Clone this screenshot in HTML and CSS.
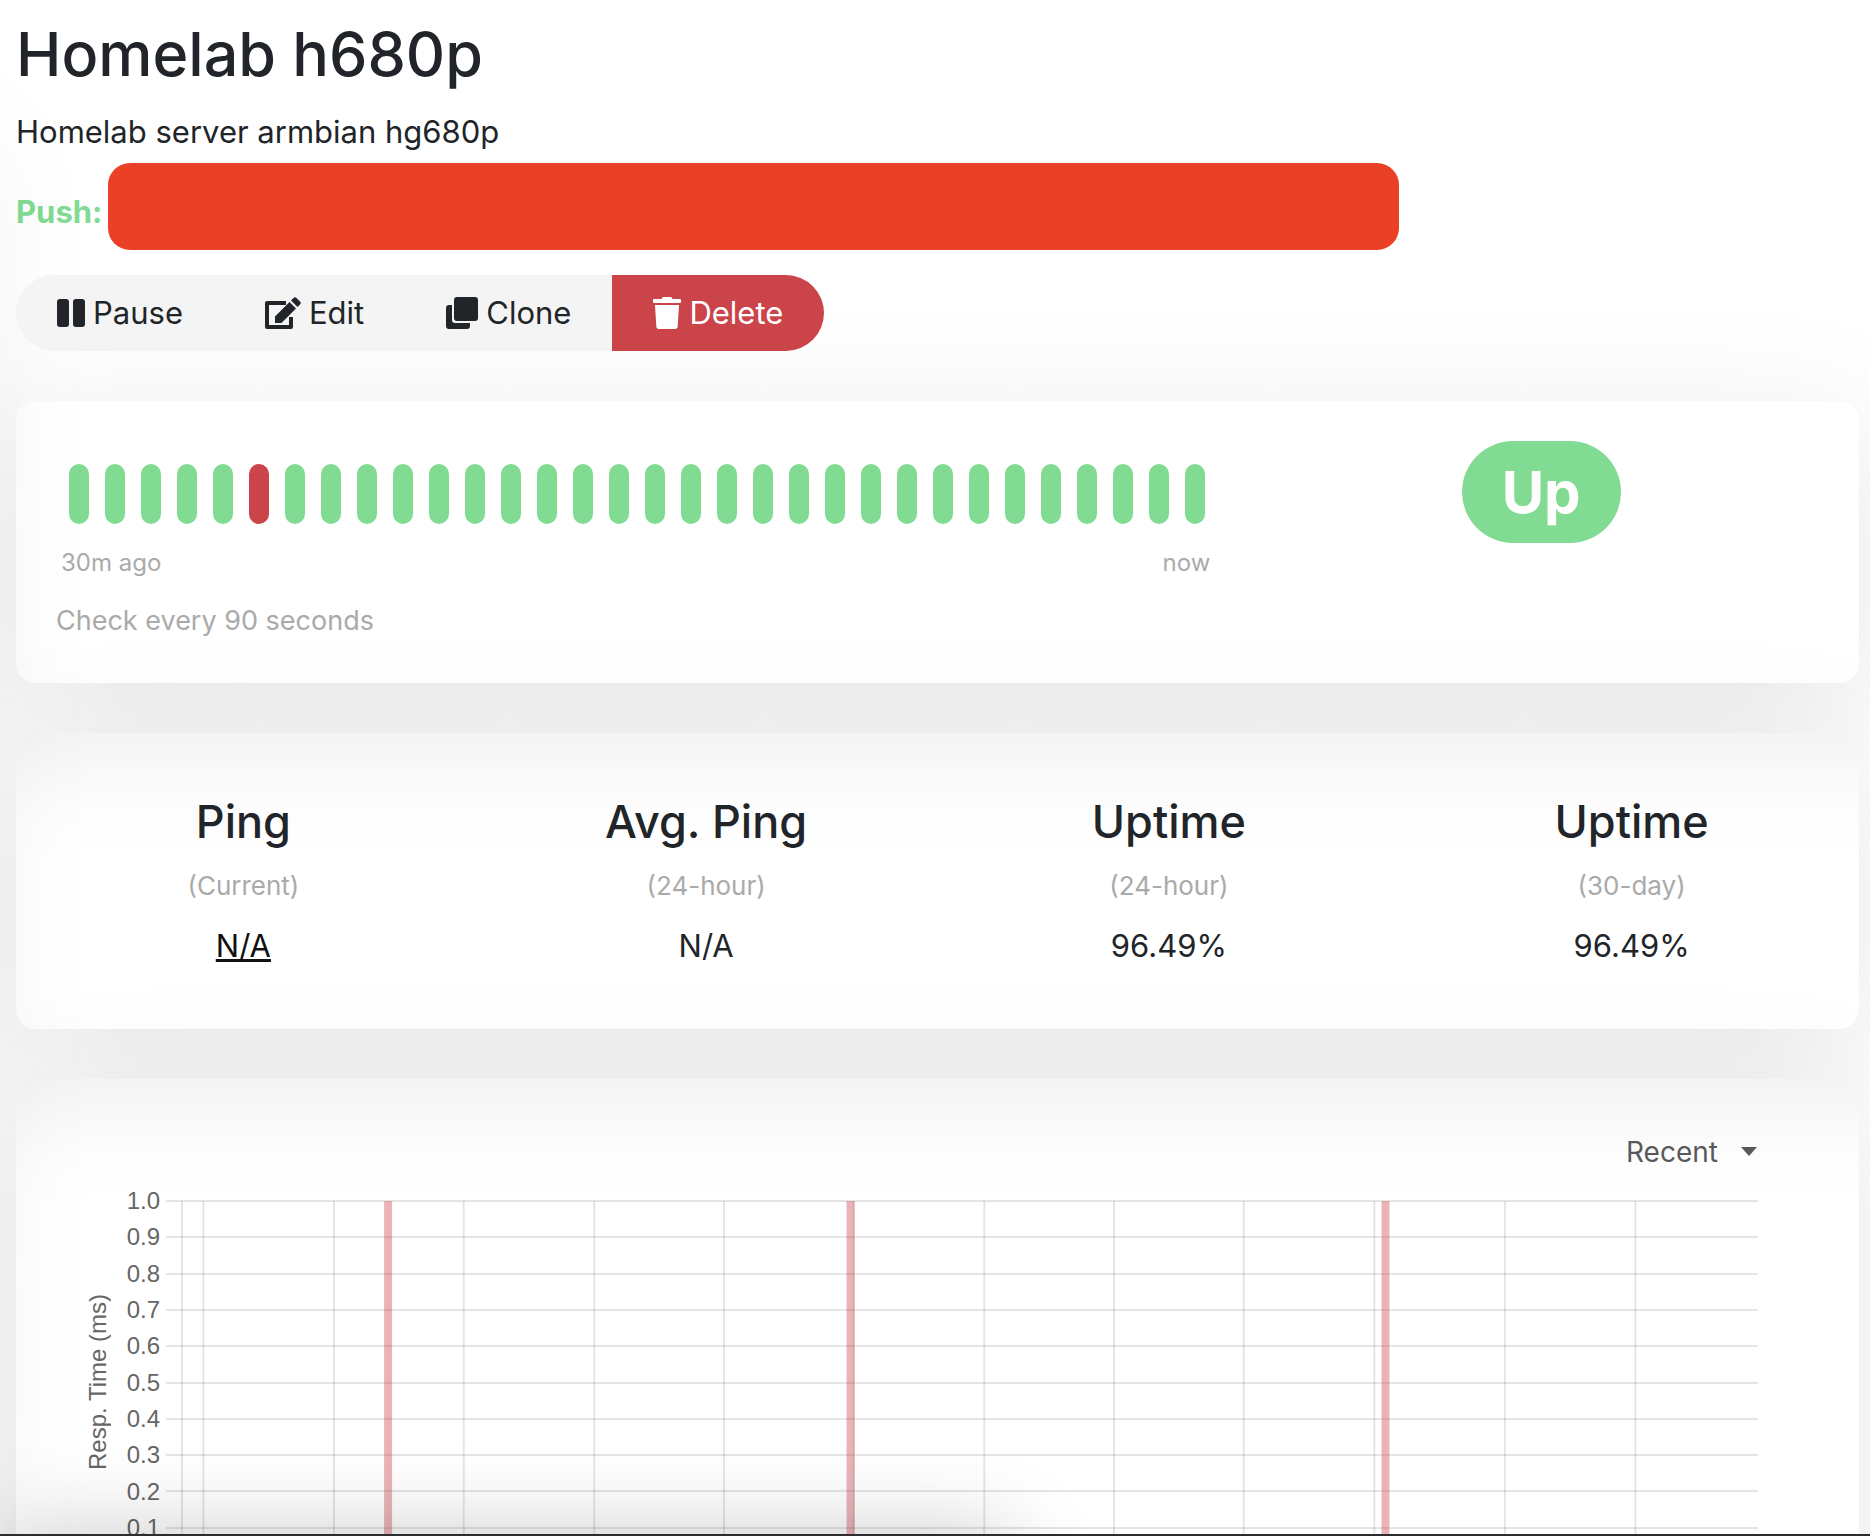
FILE: index.html
```html
<!DOCTYPE html>
<html lang="en">
<head>
    <meta charset="UTF-8">
    <meta name="viewport" content="width=device-width, initial-scale=1.0">
    <title>Homelab h680p</title>
    <link rel="stylesheet" href="styles.css">
</head>
<body>

<div class="list-edge"></div>

<main class="page">
    <h1>Homelab h680p</h1>
    <p class="description">Homelab server armbian hg680p</p>
    <div class="push">
        <span class="push-label">Push:</span>
        <span class="push-url"></span>
    </div>

    <div class="btn-group">
        <button type="button" class="btn">
            <svg class="icon icon-pause" viewBox="0 0 28 32"><rect x="0" y="2" width="12" height="28" rx="3"/><rect x="16" y="2" width="12" height="28" rx="3"/></svg>
            Pause
        </button>
        <button type="button" class="btn">
            <svg class="icon icon-edit" viewBox="0 0 36 32"><path d="M21 6H2V30H26V20" fill="none" stroke="currentColor" stroke-width="4" stroke-linejoin="round"/><path d="M10 26V19.500L24.500 5L31 11.500L16.500 26Z"/><path d="M26 3.500L28.500 1Q30 -.5 31.500 1L35 4.500Q36.500 6 35 7.500L32.500 10Z"/></svg>
            Edit
        </button>
        <button type="button" class="btn">
            <svg class="icon icon-clone" viewBox="0 0 32 32"><rect x="8" y="0" width="24" height="24" rx="3"/><path d="M6 8H3Q0 8 0 11V29Q0 32 3 32H21Q24 32 24 29V26H9Q6 26 6 23Z"/></svg>
            Clone
        </button>
        <button type="button" class="btn btn-danger">
            <svg class="icon icon-trash" viewBox="0 0 28 32"><path d="M10.500 0H17.500Q18.500 0 19 1L19.500 2H27Q28 2 28 3V5Q28 6 27 6H1Q0 6 0 5V3Q0 2 1 2H8.500L9 1Q9.500 0 10.500 0Z"/><path d="M2 8H26L24.700 29.200Q24.500 32 21.700 32H6.300Q3.500 32 3.300 29.200Z"/></svg>
            Delete
        </button>
    </div>

    <section class="card heartbeat">
        <div class="heartbeat-col">
            <div class="beats" id="beats"></div>
            <div class="beat-times"><span>30m ago</span><span>now</span></div>
            <p class="interval">Check every 90 seconds</p>
        </div>
        <div class="status-col"><span class="badge">Up</span></div>
    </section>

    <section class="card stats">
        <div class="stats-row">
            <div class="stat">
                <h4>Ping</h4>
                <p>(Current)</p>
                <a href="#chart">N/A</a>
            </div>
            <div class="stat">
                <h4>Avg. Ping</h4>
                <p>(24-hour)</p>
                <span>N/A</span>
            </div>
            <div class="stat">
                <h4>Uptime</h4>
                <p>(24-hour)</p>
                <span>96.49%</span>
            </div>
            <div class="stat">
                <h4>Uptime</h4>
                <p>(30-day)</p>
                <span>96.49%</span>
            </div>
        </div>
    </section>

    <section class="card chart-card" id="chart">
        <div class="period">
            <select aria-label="Chart period">
                <option>Recent</option>
            </select>
            <svg class="caret" viewBox="0 0 16 9"><path d="M0 0H16L8 9Z"/></svg>
        </div>
        <div class="chart">
            <div class="axis-title">Resp. Time (ms)</div>
            <div class="axis-labels" id="labels"></div>
            <svg class="plot" id="plot"></svg>
        </div>
    </section>
</main>

<div class="bottom-shade"></div>
<div class="bottom-bar"></div>

<script>
    // Heartbeats, oldest first
    const beats = document.getElementById('beats');
    for (let i = 0; i < 32; i++) {
        const beat = document.createElement('div');
        beat.className = i === 5 ? 'beat down' : 'beat';
        beats.appendChild(beat);
    }

    // Response time chart, x positions are a share of the plot width
    const ticks = [1, 2.35, 10.55, 18.7, 26.9, 35.05, 43.2, 51.4, 59.55, 67.7, 75.9, 84.1, 92.3];
    const downs = [13.95, 43, 76.6];
    const labels = document.getElementById('labels');
    let lines = '';

    for (let i = 0; i < 10; i++) {
        const y = Math.round(i * 36.3) + 1;
        lines += `<line class="grid" x1="0" x2="100%" y1="${y}" y2="${y}"/>`;
        labels.innerHTML += `<span>${((10 - i) / 10).toFixed(1)}</span>`;
    }
    ticks.forEach(x => {
        lines += `<line class="grid" x1="${x}%" x2="${x}%" y1="1" y2="100%"/>`;
    });
    downs.forEach(x => {
        lines += `<line class="down-bar" x1="${x}%" x2="${x}%" y1="1" y2="100%"/>`;
    });
    document.getElementById('plot').innerHTML = lines;
</script>

</body>
</html>
```
FILE: styles.css
```css
* {
    box-sizing: border-box;
}
body {
    margin: 0;
    height: 100vh;
    overflow: hidden;
    background-color: #fff;
    color: #212529;
    font-family: Inter, "Noto Sans", sans-serif;
    font-size: 31px;
    line-height: 48px;
}
h1, h4, p {
    margin: 0;
}
.page {
    padding: 16px 11px 0 16px;
}
h1 {
    font-size: 61px;
    font-weight: 500;
    line-height: 76px;
    margin-bottom: 16px;
}

/* Push address */
.push {
    display: flex;
    align-items: center;
    gap: 6px;
    margin: 7px 0 25px;
}
.push-label {
    color: #82db92;
    font-weight: 700;
    padding-top: 10px;
}
.push-url {
    width: 70%;
    height: 87px;
    border-radius: 22px;
    background-color: #ea4025;
}

/* Actions */
.btn-group {
    position: relative;
    display: flex;
    width: fit-content;
    border-radius: 38px;
    overflow: hidden;
    margin-bottom: 50px;
}
.btn {
    display: flex;
    align-items: center;
    gap: 8px;
    height: 76px;
    padding: 0 41px;
    border: none;
    background-color: #f4f4f4;
    color: #212529;
    font: inherit;
    cursor: pointer;
}
.btn-danger {
    background-color: #cb444a;
    color: #fff;
}
.icon {
    height: 32px;
    fill: currentColor;
}
.icon-pause, .icon-trash {
    width: 28px;
}
.icon-edit {
    width: 36px;
}
.icon-clone {
    width: 32px;
}

/* Cards */
.card {
    border-radius: 20px;
    background-color: #fff;
    box-shadow: 0 30px 140px rgba(0, 0, 0, 0.1);
    margin-bottom: 50px;
}
/* the shadow of the card above falls over the next one */
.card + .card {
    background-image: linear-gradient(rgba(0, 0, 0, 0.044), rgba(0, 0, 0, 0.022) 40px, rgba(0, 0, 0, 0.008) 80px, transparent 130px);
}
.heartbeat {
    display: grid;
    grid-template-columns: 2fr 1fr;
    padding: 40px 16px;
    height: 282px;
}
.heartbeat-col {
    padding: 0 24px;
}
.beats {
    display: flex;
    gap: 16px;
    padding: 23px 0 23px 13px;
}
.beat {
    width: 20px;
    height: 60px;
    border-radius: 10px;
    background-color: #82db92;
}
.beat.down {
    background-color: #cb444a;
}
.beat-times {
    display: flex;
    justify-content: space-between;
    padding: 0 5px;
    color: #aaa;
    font-size: 24px;
    line-height: 32px;
}
.interval {
    margin-top: 22px;
    color: #aaa;
    font-size: 27px;
    line-height: 40px;
}
.status-col {
    text-align: center;
}
.badge {
    display: inline-block;
    padding: 0 40px;
    border-radius: 51px;
    background-color: #82db92;
    color: #fff;
    font-size: 58px;
    font-weight: 700;
    line-height: 102px;
}
.stats {
    padding: 60px 0;
    height: 296px;
}
.stats-row {
    display: grid;
    grid-template-columns: repeat(4, 1fr);
    margin: 0 -4px;
    text-align: center;
}
.stat h4 {
    font-size: 45px;
    font-weight: 500;
    line-height: 58px;
}
.stat p {
    margin: 15px 0 16px;
    color: #aaa;
    font-size: 26px;
    line-height: 40px;
}
.stat a {
    color: #111;
}

/* Chart */
.chart-card {
    padding: 48px 101px 40px 68px;
}
.period {
    position: relative;
    width: fit-content;
    margin-left: auto;
}
.period select {
    appearance: none;
    padding: 0 40px 0 0;
    border: none;
    background: none;
    color: #595959;
    font: inherit;
    font-size: 28px;
    line-height: 48px;
}
.caret {
    position: absolute;
    top: 20px;
    right: 1px;
    width: 16px;
    height: 9px;
    fill: #595959;
    pointer-events: none;
}
.chart {
    display: flex;
    margin-top: 24px;
    color: #666;
    font-family: "Liberation Sans", Arial, sans-serif;
    font-size: 24px;
    line-height: 36px;
}
.axis-title {
    width: 28px;
    height: 364px;
    line-height: 28px;
    text-align: center;
    writing-mode: vertical-rl;
    transform: rotate(180deg);
}
.axis-labels {
    display: flex;
    flex-direction: column;
    justify-content: space-between;
    width: 48px;
    height: 363px;
    margin: -17px 6px 0 0;
    text-align: right;
}
.plot {
    flex: 1;
    height: 372px;
}
.grid {
    stroke: rgba(0, 0, 0, 0.1);
    stroke-width: 2;
}
.down-bar {
    stroke: rgba(203, 68, 74, 0.4);
    stroke-width: 8;
}

/* Shadows of the neighbouring panels */
.list-edge {
    position: absolute;
    top: 120px;
    bottom: 0;
    left: -400px;
    width: 360px;
    box-shadow: 0 30px 140px rgba(0, 0, 0, 0.1);
    pointer-events: none;
}
.bottom-shade {
    position: absolute;
    top: 100%;
    left: 0;
    width: 54%;
    height: 200px;
    box-shadow: 0 0 90px rgba(0, 0, 0, 0.22);
    pointer-events: none;
}
.bottom-bar {
    position: absolute;
    bottom: 0;
    left: 0;
    width: 100%;
    height: 2px;
    background-color: #2d2d30;
}
```
